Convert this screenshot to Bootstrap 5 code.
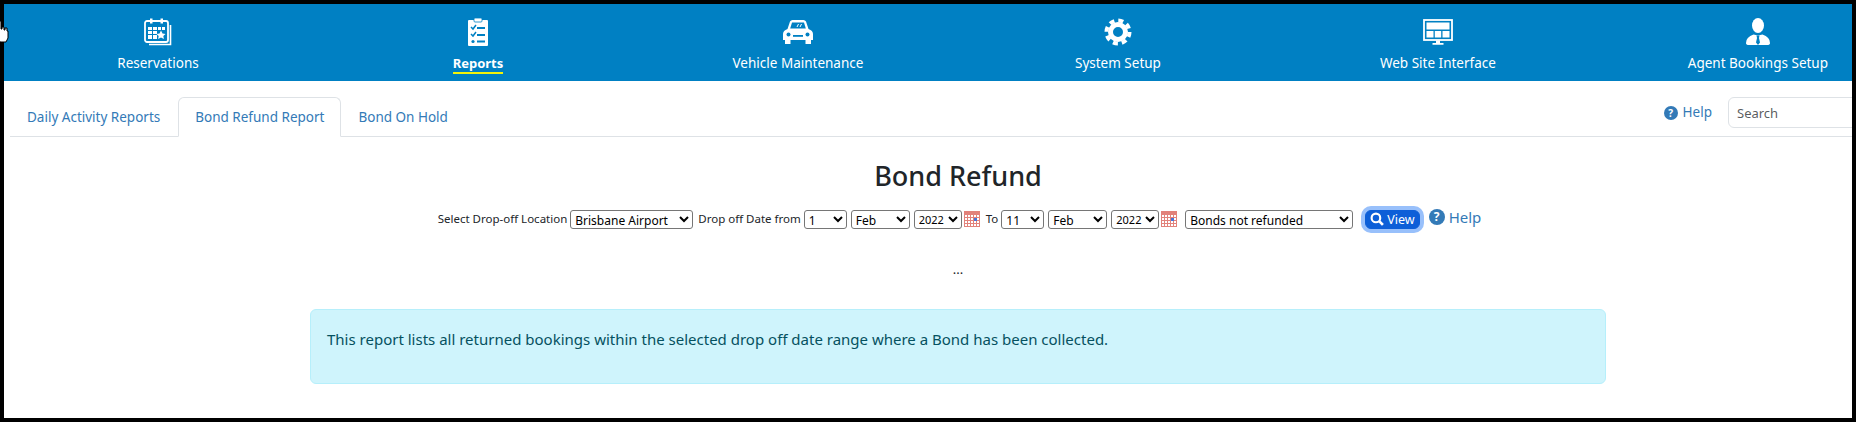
<!DOCTYPE html>
<html lang="en">
<head>
    <meta charset="UTF-8">
    <meta name="viewport" content="width=device-width, initial-scale=1.0">
    <title>Bond Refund</title>
    <link href="https://cdn.jsdelivr.net/npm/bootstrap@5.3.0/dist/css/bootstrap.min.css" rel="stylesheet">
    <style>
        html, body {
            height: 100%;
            overflow: hidden;
        }
        body {
            background-color: #000;
            padding: 4px;
            font-family: "Noto Sans", "Open Sans", sans-serif;
            color: #212529;
        }
        .screen-frame {
            height: 414px;
            background-color: #fff;
            overflow: hidden;
        }
        .page-canvas {
            width: 1920px;
            margin-left: -6px;
        }
        .top-menu {
            height: 77px;
            background-color: #0080c3;
        }
        .menu-tile {
            height: 77px;
            padding-top: 13px;
            color: #fff;
            font-size: 13.5px;
            text-align: center;
        }
        .menu-tile svg {
            display: block;
            height: 30px;
            margin: 0 auto 6px;
        }
        .menu-tile .menu-label {
            display: inline-block;
            line-height: 18px;
        }
        .menu-tile.is-current .menu-label {
            font-weight: 700;
            font-size: 13px;
            border-bottom: 2px solid #f2f20a;
        }
        .tab-bar {
            margin: 16px 0 0 12px;
            font-size: 13.5px;
        }
        .tab-bar .nav-item:first-child {
            margin-right: 1px;
        }
        .tab-bar .nav-link {
            color: #337ab7;
            padding: 9px 16px 8px;
            line-height: 21px;
        }
        .tab-bar .nav-link.active {
            color: #337ab7;
        }
        .tab-tools {
            margin-left: auto;
            color: #337ab7;
            font-size: 13.5px;
        }
        .tab-tools input {
            width: 190px;
            height: 31px;
            font-size: 13px;
            padding: 4px 8px;
            margin-left: 16px;
        }
        .help-slot {
            height: 31px;
        }
        .hint-dot {
            display: inline-block;
            width: 14px;
            height: 14px;
            line-height: 14px;
            border-radius: 50%;
            background-color: #337ab7;
            color: #fff;
            font-size: 10px;
            font-weight: 700;
            text-align: center;
            margin-right: 5px;
        }
        .report-title {
            font-size: 27px;
            font-weight: 500;
            line-height: 34px;
            margin: 22px 0 0;
            text-align: center;
        }
        .filter-line {
            margin-top: 9px;
            font-size: 11.5px;
            height: 34px;
            padding-left: 3px;
        }
        .filter-line select {
            height: 19px;
            font-family: "Noto Sans", sans-serif;
            font-size: 12px;
            padding: 0;
            background-color: #fff;
            border: 1px solid #767676;
            border-radius: 3px;
            color: #000;
        }
        .sel-place { width: 123px; margin: 0 5px 0 3px; }
        .sel-day { width: 43px; margin: 0 4px 0 3px; }
        .sel-month { width: 59px; margin-right: 4px; }
        .filter-line .sel-year { width: 48px; margin-right: 2px; font-size: 11px; }
        .sel-status { width: 168px; margin: 0 10px 0 8px; }
        .view-btn {
            font-size: 12.5px;
            font-weight: 400;
            padding: 0 4px;
            height: 19px;
            line-height: 17px;
            background-color: #0d5fd8;
            border-color: #0d5fd8;
            box-shadow: 0 0 0 4px #98c0fb;
            margin: 0 9px 0 2px;
            display: inline-flex;
            align-items: center;
            gap: 3px;
        }
        .filter-help {
            color: #337ab7;
            font-size: 15px;
            margin-top: -4px;
        }
        .filter-help .hint-dot {
            width: 16px;
            height: 16px;
            line-height: 16px;
            font-size: 12px;
            margin-right: 4px;
        }
        .to-label {
            margin-left: 6px;
        }
        .wait-dots {
            font-size: 13px;
            line-height: 14px;
            margin-top: 26px;
            text-align: center;
        }
        .report-note {
            width: 1296px;
            height: 75px;
            margin: 33px auto 0;
            padding: 18px 16px;
            font-size: 15px;
            line-height: 22px;
            border-radius: 6px;
            color: #055160;
            background-color: #cff4fc;
            border-color: #b6effb;
        }
        .pointer-hand {
            position: absolute;
            left: -4px;
            top: 20px;
        }
    </style>
</head>
<body>
<div class="screen-frame">
    <div class="page-canvas">
        <div class="row g-0 top-menu">
            <div class="col-2 menu-tile">
                <svg viewBox="0 0 30 30">
                    <path d="M27.500 8v19.500H6" fill="none" stroke="#fff" stroke-width="1.600"/>
                    <rect x="2" y="4" width="23" height="21" rx="2" fill="none" stroke="#fff" stroke-width="1.800"/>
                    <rect x="7" y="1.500" width="2.500" height="5" fill="#fff"/>
                    <rect x="17.500" y="1.500" width="2.500" height="5" fill="#fff"/>
                    <path d="M5 10h4v3H5zM10 10h4v3h-4zM15 10h3v3h-3zM19 10h3v3h-3zM5 14h4v3H5zM10 14h4v3h-4zM5 18h4v4H5zM10 18h4v4h-4z" fill="#fff"/>
                    <path d="M18 13.500l1.500 3 3 .5-2.200 2 .6 3-2.900-1.500-2.900 1.500.6-3-2.200-2 3-.5z" fill="#fff"/>
                </svg>
                <span class="menu-label">Reservations</span>
            </div>
            <div class="col-2 menu-tile is-current">
                <svg viewBox="0 0 30 30">
                    <rect x="5" y="3" width="20" height="26" rx="1" fill="#fff"/>
                    <rect x="11" y="1" width="8" height="4" rx="1" fill="#fff" stroke="#0080c3" stroke-width=".8"/>
                    <path d="M8 10l2 2 3-4M8 17l2 2 3-4" fill="none" stroke="#0080c3" stroke-width="1.500"/>
                    <path d="M14 11h8M14 18h8M14 24.500h8" stroke="#0080c3" stroke-width="1.800"/>
                    <circle cx="10" cy="24.500" r="1.600" fill="#0080c3"/>
                </svg>
                <span class="menu-label">Reports</span>
            </div>
            <div class="col-2 menu-tile">
                <svg viewBox="0 0 32 30">
                    <path d="M8 4.500Q8.800 3 10.500 3h11q1.700 0 2.500 1.500L26.500 12q4.500 1.500 4.500 5v6h-2v4h-5.500v-4h-15v4H3v-4H1v-6q0-3.500 4.500-5z" fill="#fff"/>
                    <path d="M10 5.500h12l1.800 6H8.200z" fill="#0080c3"/>
                    <path d="M15 10l1.500-3M18 10l1.500-3" stroke="#fff" stroke-width="1"/>
                    <circle cx="6.500" cy="17.500" r="2" fill="#0080c3"/>
                    <circle cx="25.500" cy="17.500" r="2" fill="#0080c3"/>
                    <rect x="11" y="18" width="10" height="1.800" fill="#0080c3"/>
                </svg>
                <span class="menu-label">Vehicle Maintenance</span>
            </div>
            <div class="col-2 menu-tile">
                <svg viewBox="0 0 30 30">
                    <circle cx="15" cy="15" r="11.500" fill="none" stroke="#fff" stroke-width="4" stroke-dasharray="5 4.030"/>
                    <circle cx="15" cy="15" r="7.500" fill="none" stroke="#fff" stroke-width="5"/>
                </svg>
                <span class="menu-label">System Setup</span>
            </div>
            <div class="col-2 menu-tile">
                <svg viewBox="0 0 30 30">
                    <rect x="1" y="3" width="28" height="20" fill="none" stroke="#fff" stroke-width="1.800"/>
                    <path d="M3.500 5.500h23v7h-23zM3.500 14h7v6.500h-7zM11.800 14h6.400v6.500h-6.400zM19.500 14h7v6.500h-7z" fill="#fff"/>
                    <path d="M13 23.500h4v2.500h3.500v1.800h-11V26H13z" fill="#fff"/>
                </svg>
                <span class="menu-label">Web Site Interface</span>
            </div>
            <div class="col-2 menu-tile">
                <svg viewBox="0 0 30 30">
                    <ellipse cx="15" cy="8.500" rx="6" ry="7.500" fill="#fff"/>
                    <path d="M3 26q0-6 7.500-8.500l4.500 1 4.500-1q7.500 2.500 7.500 8.500 0 2-3 2H6q-3 0-3-2z" fill="#fff"/>
                    <path d="M13.500 18.500h3l-.5 2.500 1 4.500-2 2.500-2-2.500 1-4.500z" fill="#0080c3"/>
                </svg>
                <span class="menu-label">Agent Bookings Setup</span>
            </div>
        </div>

        <div class="d-flex">
            <ul class="nav nav-tabs tab-bar flex-grow-1">
                <li class="nav-item"><a class="nav-link" href="#">Daily Activity Reports</a></li>
                <li class="nav-item"><a class="nav-link active" href="#">Bond Refund Report</a></li>
                <li class="nav-item"><a class="nav-link" href="#">Bond On Hold</a></li>
                <li class="nav-item tab-tools d-flex align-items-start">
                    <span class="help-slot d-flex align-items-center"><span class="hint-dot">?</span>Help</span>
                    <input class="form-control" type="text" placeholder="Search">
                </li>
            </ul>
        </div>

        <h2 class="report-title">Bond Refund</h2>

        <div class="filter-line d-flex justify-content-center align-items-center">
            <span>Select Drop-off Location</span>
            <select class="sel-place"><option>Brisbane Airport</option></select>
            <span>Drop off Date from</span>
            <select class="sel-day"><option>1</option></select>
            <select class="sel-month"><option>Feb</option></select>
            <select class="sel-year"><option>2022</option></select>
            <svg width="16" height="16" viewBox="0 0 16 16" shape-rendering="crispEdges">
                <rect x="0" y="0" width="16" height="16" fill="#fff"/>
                <rect x="0" y="0" width="16" height="3" fill="#e2827b"/>
                <path d="M.5 3v13M3.500 3v13M6.500 3v13M9.500 3v13M12.500 3v13M15.500 3v13M0 3.500h16M0 6.500h16M0 9.500h16M0 12.500h16M0 15.500h16" stroke="#e2827b" stroke-width="1"/>
                <rect x="10" y="7" width="3" height="3" fill="#4a76d8"/>
            </svg>
            <span class="to-label">To</span>
            <select class="sel-day"><option>11</option></select>
            <select class="sel-month"><option>Feb</option></select>
            <select class="sel-year"><option>2022</option></select>
            <svg width="16" height="16" viewBox="0 0 16 16" shape-rendering="crispEdges">
                <rect x="0" y="0" width="16" height="16" fill="#fff"/>
                <rect x="0" y="0" width="16" height="3" fill="#e2827b"/>
                <path d="M.5 3v13M3.500 3v13M6.500 3v13M9.500 3v13M12.500 3v13M15.500 3v13M0 3.500h16M0 6.500h16M0 9.500h16M0 12.500h16M0 15.500h16" stroke="#e2827b" stroke-width="1"/>
                <rect x="10" y="7" width="3" height="3" fill="#4a76d8"/>
            </svg>
            <select class="sel-status"><option>Bonds not refunded</option></select>
            <button type="button" class="btn btn-primary view-btn">
                <svg width="14" height="14" viewBox="0 0 13 13">
                    <circle cx="5.500" cy="5.500" r="4" fill="none" stroke="#fff" stroke-width="2"/>
                    <path d="M8.500 8.500l3.500 3.500" stroke="#fff" stroke-width="2.500"/>
                </svg>
                View
            </button>
            <span class="filter-help d-flex align-items-center"><span class="hint-dot">?</span>Help</span>
        </div>

        <div class="wait-dots">...</div>

        <div class="alert alert-info report-note" role="alert">
            This report lists all returned bookings within the selected drop off date range where a Bond has been collected.
        </div>
    </div>
</div>
<svg class="pointer-hand" width="14" height="24" viewBox="0 0 14 24">
    <path d="M3 1h2v8h1V7h2v3h1V8h2v3h1v7l-2 4H4l-3-6V3z" fill="#fff" stroke="#000" stroke-width="1"/>
</svg>
<script src="https://cdn.jsdelivr.net/npm/bootstrap@5.3.0/dist/js/bootstrap.bundle.min.js"></script>
</body>
</html>
